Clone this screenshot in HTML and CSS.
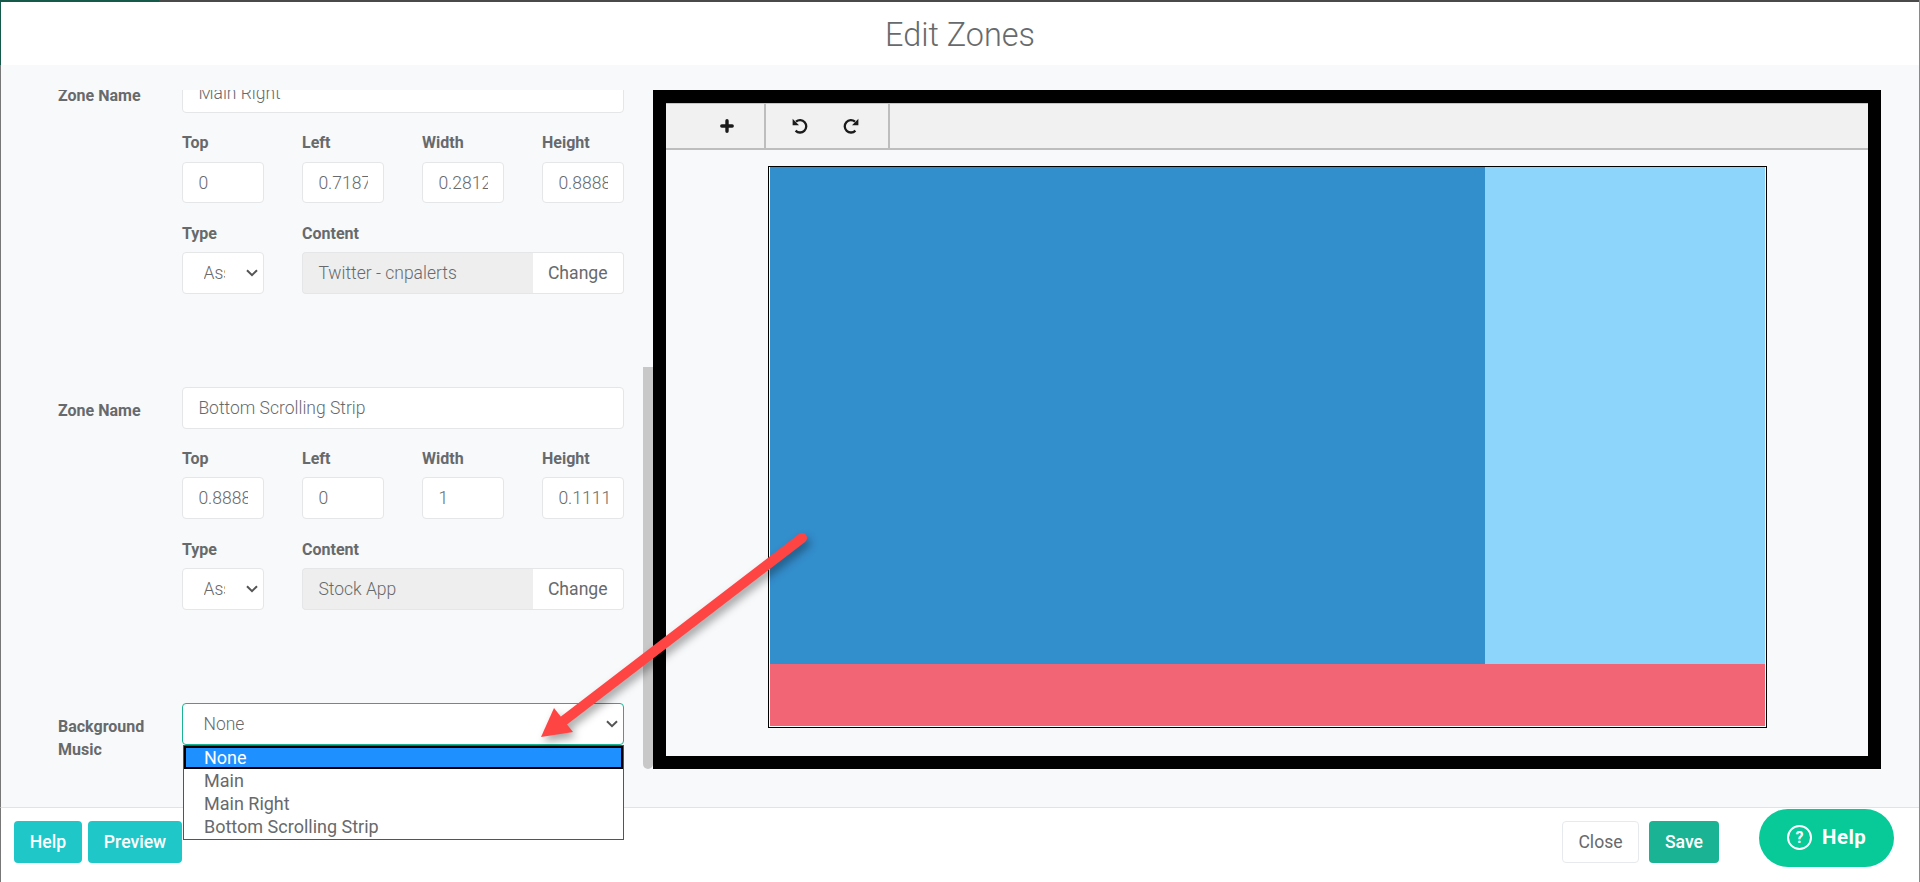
FILE: index.html
```html
<!DOCTYPE html>
<html lang="en">
<head>
<meta charset="utf-8">
<title>Edit Zones</title>
<link rel="stylesheet" href="styles.css">
</head>
<body>
<div class="app">
  <div class="topline"><span class="topline-green"></span><span class="topline-gray"></span></div>
  <header class="header"><h1 class="title">Edit Zones</h1></header>
  <main class="main">
    <div class="form-clip">
      <form class="form">
        <section class="zone">
          <label class="field-label">Zone Name</label>
          <div class="zone-fields">
            <input class="control" type="text" value="Main Right">
            <div class="grid">
              <div class="cell"><label class="sub-label">Top</label><input class="control" type="text" value="0"></div>
              <div class="cell"><label class="sub-label">Left</label><input class="control" type="text" value="0.71875"></div>
              <div class="cell"><label class="sub-label">Width</label><input class="control" type="text" value="0.28125"></div>
              <div class="cell"><label class="sub-label">Height</label><input class="control" type="text" value="0.88888"></div>
              <div class="cell cell-low"><label class="sub-label">Type</label><select class="control select select-small"><option>Asset</option></select></div>
              <div class="cell cell-low span3"><label class="sub-label">Content</label>
                <div class="group"><input class="control group-input" type="text" value="Twitter - cnpalerts" disabled><button class="group-btn" type="button">Change</button></div>
              </div>
            </div>
          </div>
        </section>
        <section class="zone">
          <label class="field-label">Zone Name</label>
          <div class="zone-fields">
            <input class="control" type="text" value="Bottom Scrolling Strip">
            <div class="grid">
              <div class="cell"><label class="sub-label">Top</label><input class="control" type="text" value="0.88888"></div>
              <div class="cell"><label class="sub-label">Left</label><input class="control" type="text" value="0"></div>
              <div class="cell"><label class="sub-label">Width</label><input class="control" type="text" value="1"></div>
              <div class="cell"><label class="sub-label">Height</label><input class="control" type="text" value="0.1111"></div>
              <div class="cell cell-low"><label class="sub-label">Type</label><select class="control select select-small"><option>Asset</option></select></div>
              <div class="cell cell-low span3"><label class="sub-label">Content</label>
                <div class="group"><input class="control group-input" type="text" value="Stock App" disabled><button class="group-btn" type="button">Change</button></div>
              </div>
            </div>
          </div>
        </section>
        <section class="zone music">
          <label class="field-label">Background Music</label>
          <div class="zone-fields">
            <select class="control select music-select"><option>None</option></select>
          </div>
        </section>
      </form>
    </div>
    <div class="scrollbar"></div>
    <div class="preview">
      <div class="toolbar">
        <div class="tool-group tool-add">
          <svg class="tool-icon" viewBox="0 0 16 16"><path d="M8 2.8v10.4M2.8 8h10.4" fill="none" stroke="#1b1b1b" stroke-width="3.4" stroke-linecap="round"/></svg>
        </div>
        <div class="tool-group tool-history">
          <svg class="tool-icon" viewBox="0 0 16 16"><path d="M4 3.6A6.2 6.2 0 1 1 3.6 12.6" fill="none" stroke="#1b1b1b" stroke-width="2.3"/><path d="M0.6 0.8v6.4h6.4z" fill="#1b1b1b"/></svg>
          <svg class="tool-icon" viewBox="0 0 16 16"><path d="M12 3.6A6.2 6.2 0 1 0 12.4 12.6" fill="none" stroke="#1b1b1b" stroke-width="2.3"/><path d="M15.4 0.8v6.4H9z" fill="#1b1b1b"/></svg>
        </div>
      </div>
      <div class="stage">
        <div class="canvas">
          <div class="canvas-top">
            <div class="zone-main"></div>
            <div class="zone-right"></div>
          </div>
          <div class="zone-strip"></div>
        </div>
      </div>
    </div>
  </main>
  <footer class="footer">
    <div class="footer-left">
      <button class="btn btn-info btn-help" type="button">Help</button>
      <button class="btn btn-info btn-preview" type="button">Preview</button>
    </div>
    <div class="footer-right">
      <button class="btn btn-close" type="button">Close</button>
      <button class="btn btn-save" type="button">Save</button>
    </div>
  </footer>
  <ul class="dropdown">
    <li class="option option-active">None</li>
    <li class="option">Main</li>
    <li class="option">Main Right</li>
    <li class="option">Bottom Scrolling Strip</li>
  </ul>
  <svg class="arrow" viewBox="0 0 1920 882">
    <path d="M802 538L562 722" fill="none" stroke="#ff4444" stroke-width="10" stroke-linecap="round"/>
    <path d="M554 708L573 732L541 737z" fill="#ff4444"/>
  </svg>
  <a class="help-bubble"><span class="help-circle">?</span><span>Help</span></a>
</div>
</body>
</html>
```
FILE: styles.css
```css
* { box-sizing: border-box; }
html, body { margin: 0; height: 100%; overflow: hidden; }
body { font-family: Roboto, "Liberation Sans", sans-serif; color: #676a6c; background: #fff; }

.app { position: relative; width: 1920px; height: 882px; display: flex; flex-direction: column; overflow: hidden; border-right: 1px solid #8a8a8a; }

.topline { display: flex; height: 2px; flex: none; }
.topline-green { width: 159px; background: #14594a; }
.topline-gray { flex: 1; background: #4a4a4a; }

.header { height: 63px; flex: none; padding-top: 4px; background: #fff; border-left: 1px solid #14594a; display: flex; align-items: center; justify-content: center; }
.title { margin: 0; font-size: 32.4px; font-weight: 300; color: #676a6c; line-height: 1; }

.main { height: 742px; flex: none; display: flex; align-items: flex-start; padding-top: 25px; background: #f8f9fb; border-left: 1px solid #777; }

.form-clip { width: 642px; height: 679px; overflow: hidden; flex: none; }
.form { margin-top: -18.2px; padding-left: 57px; width: 623px; }
.zone { display: flex; margin-bottom: 93.1px; }
.field-label { width: 124px; flex: none; font-size: 16px; font-weight: 700; line-height: 23px; padding-top: 11.8px; color: #676a6c; }
.music .field-label { width: 100px; margin-right: 24px; }
.zone-fields { flex: 1; min-width: 0; }
.grid { display: grid; grid-template-columns: repeat(4, 1fr); column-gap: 38px; }
.cell { min-width: 0; }
.span3 { grid-column: span 3; }
.sub-label { display: block; font-size: 16px; font-weight: 700; line-height: 22px; padding-top: 19px; margin-bottom: 7.4px; color: #676a6c; }
.cell-low .sub-label { padding-top: 19.6px; margin-bottom: 7.3px; }
.cell-low .control, .cell-low .group-btn { height: 42px; }

.control { display: block; width: 100%; height: 41.6px; padding: 6px 15.4px; border: 1px solid #e5e6e7; border-radius: 4px; background: #fff; font-family: Roboto, "Liberation Sans", sans-serif; font-size: 17.5px; font-weight: 300; color: #676a6c; outline: none; }
.select { appearance: none; padding-left: 20.5px; padding-right: 30px; background-image: url("data:image/svg+xml,%3Csvg xmlns='http://www.w3.org/2000/svg' viewBox='0 0 12 8'%3E%3Cpath d='M1 1.2l5 5 5-5' fill='none' stroke='%23555' stroke-width='2'/%3E%3C/svg%3E"); background-repeat: no-repeat; background-size: 12px 8px; background-position: right 5.5px center; }
.select-small { padding-right: 38px; }
.music-select { border-color: #1ab394; }

.group { display: flex; }
.group-input { flex: 1; min-width: 0; background: #eee; border-right: 0; border-radius: 4px 0 0 4px; }
.group-btn { width: 91.5px; flex: none; padding: 0; border: 1px solid #e5e6e7; border-left: 0; border-radius: 0 4px 4px 0; background: #fff; font-family: inherit; font-size: 17.6px; font-weight: 400; color: #676a6c; }

.scrollbar { width: 10px; height: 402px; margin-top: 277px; flex: none; background: #c8c8c8; border-radius: 0 0 5px 5px; }

.preview { width: 1228px; height: 679px; flex: none; border: 13px solid #000; background: #f8f9fb; display: flex; flex-direction: column; }
.toolbar { height: 47px; flex: none; display: flex; background: #f1f1f1; border-top: 1px solid #c4c4c4; border-bottom: 2px solid #bdbdbd; }
.tool-group { height: 44px; display: flex; align-items: center; border-right: 2px solid #bdbdbd; }
.tool-add { width: 100px; justify-content: flex-end; padding-right: 29px; }
.tool-history { width: 124px; gap: 35px; padding-left: 26px; }
.tool-icon { width: 16px; height: 16px; flex: none; }
.stage { flex: 1; display: flex; justify-content: center; padding: 16px 0 0 1px; }
.canvas { width: 999px; height: 562px; border: 1px solid #000; display: flex; flex-direction: column; padding: 0 1px 1px 1px; background: #fff; }
.canvas-top { flex: 1; display: flex; }
.zone-main { flex: 1; background: #338ecc; }
.zone-right { width: 280px; background: #8dd5fa; }
.zone-strip { height: 62px; flex: none; background: #f16574; }

.footer { height: 75px; flex: none; display: flex; justify-content: space-between; padding: 13px 0 0 13px; background: #fff; border-top: 1px solid #e3e3e3; border-left: 1px solid #777; }
.footer-left, .footer-right { display: flex; align-items: flex-start; }
.footer-left { gap: 6px; }
.footer-right { gap: 10px; margin-right: 200px; }
.btn { height: 42px; padding: 0; border: 1px solid transparent; border-radius: 4px; font-family: inherit; font-size: 17.6px; font-weight: 400; }
.btn-info { background: #20c7c9; color: #fff; font-weight: 500; }
.btn-help { width: 68px; }
.btn-preview { width: 94px; }
.btn-close { width: 77px; background: #fff; border-color: #e7eaec; color: #676a6c; }
.btn-save { width: 70px; background: #1ab394; color: #fff; font-weight: 500; }

.dropdown { position: absolute; left: 183px; top: 745px; width: 441px; height: 95px; margin: 0; padding: 0; list-style: none; background: #fff; border: 1px solid #555; font-size: 18px; line-height: 23px; color: #676a6c; }
.option { height: 23px; padding-left: 20px; }
.option-active { background: #1e90ff; color: #fff; outline: 2px solid #000; outline-offset: -2px; }

.arrow { position: absolute; left: 0; top: 0; width: 1920px; height: 882px; pointer-events: none; filter: drop-shadow(3px 5px 4px rgba(0, 0, 0, .35)); }

.help-bubble { position: absolute; left: 1759px; top: 809px; width: 135px; height: 58px; border-radius: 29px; background: #08c998; color: #fff; display: flex; align-items: center; gap: 10px; padding-left: 28px; padding-bottom: 2px; font-size: 20.4px; font-weight: 700; letter-spacing: .5px; }
.help-circle { width: 25px; height: 25px; border: 2px solid #fff; border-radius: 50%; display: flex; align-items: center; justify-content: center; font-size: 16px; letter-spacing: 0; }
```
